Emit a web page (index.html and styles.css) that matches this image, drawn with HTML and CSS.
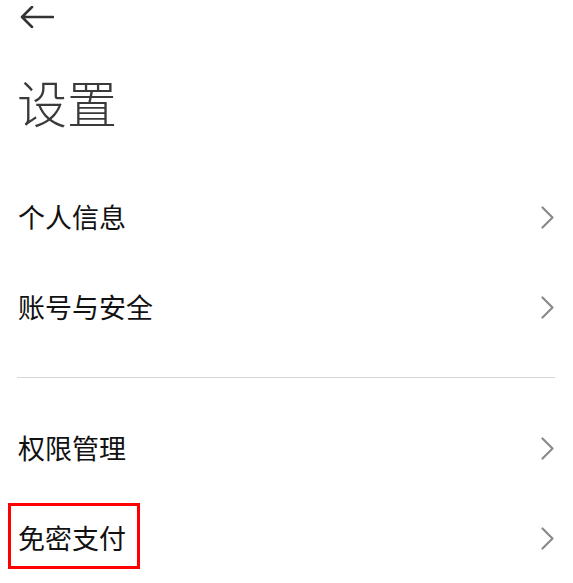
FILE: index.html
```html
<!doctype html>
<html lang="zh-CN">
  <head>
    <meta charset="UTF-8" />
    <meta content="width=device-width, initial-scale=1.0" name="viewport" />
    <title>设置</title>
    <link rel="stylesheet" href="styles.css">
  </head>
  <body>
    <div class="page">
      <div class="header">
        <svg class="back" viewBox="0 0 34 22" width="34" height="22">
          <path d="M33 11H2M12 1L2 11l10 10" />
        </svg>
      </div>
      <h1 class="title">设置</h1>
      <div class="group">
        <div class="row">
          <span class="label">个人信息</span>
          <svg class="chevron" viewBox="0 0 13 23" width="13" height="23"><path d="M1.5 1.5l10 10-10 10" /></svg>
        </div>
        <div class="row">
          <span class="label">账号与安全</span>
          <svg class="chevron" viewBox="0 0 13 23" width="13" height="23"><path d="M1.5 1.5l10 10-10 10" /></svg>
        </div>
      </div>
      <div class="divider"></div>
      <div class="group">
        <div class="row">
          <span class="label">权限管理</span>
          <svg class="chevron" viewBox="0 0 13 23" width="13" height="23"><path d="M1.5 1.5l10 10-10 10" /></svg>
        </div>
        <div class="row">
          <span class="label marked">免密支付</span>
          <svg class="chevron" viewBox="0 0 13 23" width="13" height="23"><path d="M1.5 1.5l10 10-10 10" /></svg>
        </div>
      </div>
    </div>
  </body>
</html>
```

FILE: styles.css
```css
* {
  box-sizing: border-box;
  padding: 0;
  margin: 0;
}

html,
body {
  background: #fff;
}

body {
  font-family: "Noto Sans CJK SC", "Noto Sans", sans-serif;
  color: #111;
}

.page {
  width: 573px;
  height: 583px;
  overflow: hidden;
  padding: 0 18px 0 17px;
}

.header {
  display: flex;
  align-items: center;
  height: 34px;
  padding-left: 3px;
}

.back {
  display: block;
  margin-top: -1px;
}

.back path {
  fill: none;
  stroke: #333;
  stroke-width: 2.6;
  stroke-linecap: round;
  stroke-linejoin: round;
}

.title {
  height: 138px;
  padding-top: 34px;
  font-size: 50px;
  font-weight: 300;
  line-height: 66px;
  color: #3a3a3a;
}

.row {
  display: flex;
  align-items: center;
  justify-content: space-between;
  height: 90px;
}

.label {
  position: relative;
  padding-left: 1px;
  font-size: 27px;
  line-height: 38px;
}

.marked::after {
  position: absolute;
  top: -16px;
  left: -9px;
  right: -14px;
  bottom: -12px;
  border: 3px solid #f00;
  content: "";
}

.chevron {
  display: block;
  margin-right: 1px;
}

.chevron path {
  fill: none;
  stroke: #8a8a8a;
  stroke-width: 2.2;
  stroke-linecap: round;
  stroke-linejoin: round;
}

.divider {
  height: 1px;
  margin: 25px 0 25px;
  background: #d6d6d6;
}
```
